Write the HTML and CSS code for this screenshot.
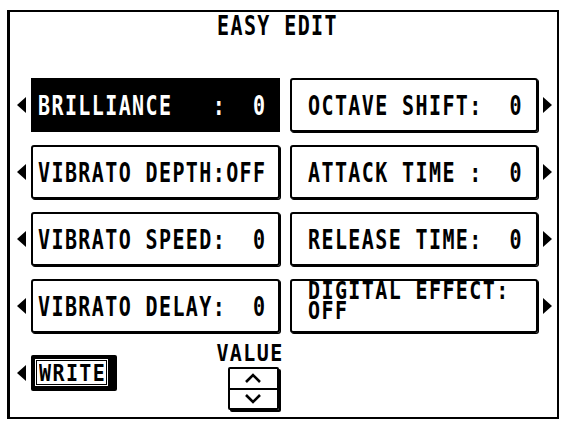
FILE: index.html
```html
<!DOCTYPE html>
<html lang="en">
  <head>
    <meta charset="UTF-8" />
    <title>Easy Edit</title>
    <link rel="stylesheet" href="styles.css">
  </head>
  <body>
    <div class="screen">
      <div class="title"><span class="lcd">EASY EDIT</span></div>

      <div class="params">
        <div class="param-row">
          <span class="arrow-left"></span>
          <div class="param param-selected"><span class="lcd">BRILLIANCE   :  0</span></div>
          <div class="param param-right"><span class="lcd">OCTAVE SHIFT:  0</span></div>
          <span class="arrow-right"></span>
        </div>
        <div class="param-row">
          <span class="arrow-left"></span>
          <div class="param"><span class="lcd">VIBRATO DEPTH:OFF</span></div>
          <div class="param param-right"><span class="lcd">ATTACK TIME :  0</span></div>
          <span class="arrow-right"></span>
        </div>
        <div class="param-row">
          <span class="arrow-left"></span>
          <div class="param"><span class="lcd">VIBRATO SPEED:  0</span></div>
          <div class="param param-right"><span class="lcd">RELEASE TIME:  0</span></div>
          <span class="arrow-right"></span>
        </div>
        <div class="param-row">
          <span class="arrow-left"></span>
          <div class="param"><span class="lcd">VIBRATO DELAY:  0</span></div>
          <div class="param param-right param-two-line"><span class="lcd">DIGITAL EFFECT:
OFF</span></div>
          <span class="arrow-right"></span>
        </div>
      </div>

      <div class="controls">
        <div class="write-group">
          <span class="arrow-left"></span>
          <div class="write-btn">
            <div class="write-inner"><span class="lcd">WRITE</span></div>
          </div>
        </div>

        <div class="value-ctrl">
          <div class="value-label"><span class="lcd">VALUE</span></div>
          <div class="spinner">
            <div class="spin-half spin-up">
              <svg width="18" height="10" viewBox="0 0 18 10">
                <polyline points="2,9 9,2 16,9" fill="none" stroke="#000" stroke-width="2.6" />
              </svg>
            </div>
            <div class="spin-half spin-down">
              <svg width="18" height="10" viewBox="0 0 18 10">
                <polyline points="2,1 9,8 16,1" fill="none" stroke="#000" stroke-width="2.6" />
              </svg>
            </div>
          </div>
        </div>
      </div>
    </div>
  </body>
</html>
```

FILE: styles.css
```css
body {
  margin: 0;
  background-color: #fff;
  color: #000;
  font-family: "DejaVu Sans Mono", "Liberation Mono", monospace;
  font-weight: bold;
  font-size: 20px;
}

.screen {
  box-sizing: border-box;
  width: 552px;
  height: 409px;
  margin: 10px 0 0 7px;
  border: 2px solid #000;
  border-left-width: 3px;
}

/* tall, narrow lcd-style lettering */
.lcd {
  display: inline-block;
  white-space: pre;
  line-height: 20px;
  letter-spacing: 1.4px;
  transform: scaleY(1.37);
}

.title {
  height: 20px;
  padding: 1px 12px 0 0;
  margin-bottom: 45px;
  text-align: center;
}

.params {
  display: flex;
  flex-direction: column;
  gap: 13px;
}

.param-row {
  display: flex;
  align-items: center;
}

.arrow-left {
  width: 0;
  height: 0;
  margin: 0 5px 0 7px;
  border-top: 8px solid transparent;
  border-bottom: 8px solid transparent;
  border-right: 9px solid #000;
}

.arrow-right {
  width: 0;
  height: 0;
  margin-left: 5px;
  border-top: 8px solid transparent;
  border-bottom: 8px solid transparent;
  border-left: 9px solid #000;
}

.param {
  box-sizing: border-box;
  display: flex;
  align-items: center;
  width: 249px;
  height: 54px;
  padding-left: 5px;
  border: 2px solid #000;
  border-radius: 3px;
  box-shadow: 1px 1px 0 #000;
}

.param-selected {
  background-color: #000;
  color: #fff;
  border-radius: 0;
  box-shadow: none;
}

.param-right {
  width: 248px;
  margin-left: 10px;
  padding-left: 16px;
}

.param-two-line {
  align-items: flex-start;
  padding-top: 3px;
}

.param-two-line .lcd {
  line-height: 17px;
  transform: scaleY(1.2);
}

.controls {
  display: flex;
  align-items: flex-start;
}

.write-group {
  display: flex;
  align-items: center;
  margin-top: 22px;
}

.write-btn {
  padding: 4px 9px 5px 4px;
  background-color: #000;
  border-radius: 2px;
}

.write-inner {
  box-sizing: border-box;
  width: 73px;
  height: 27px;
  padding: 2px 0 0 4px;
  background-color: #fff;
  box-shadow: inset 0 0 0 1px #fff, inset 0 0 0 2px #000;
}

.write-inner .lcd {
  line-height: 20px;
  transform: scaleY(1.17);
}

.value-ctrl {
  display: flex;
  flex-direction: column;
  align-items: center;
  width: 66px;
  margin-left: 100px;
}

.value-label {
  height: 20px;
  margin-top: 8px;
}

.value-label .lcd {
  transform: scaleY(1.12);
}

.spinner {
  box-sizing: border-box;
  display: flex;
  flex-direction: column;
  width: 51px;
  height: 43px;
  margin-top: 6px;
  margin-left: 6px;
  border: 2px solid #000;
  border-radius: 2px;
  box-shadow: 2px 2px 0 #000;
}

.spin-half {
  flex: 1;
  display: flex;
  align-items: center;
  justify-content: center;
}

.spin-up {
  border-bottom: 2px solid #000;
}
```
